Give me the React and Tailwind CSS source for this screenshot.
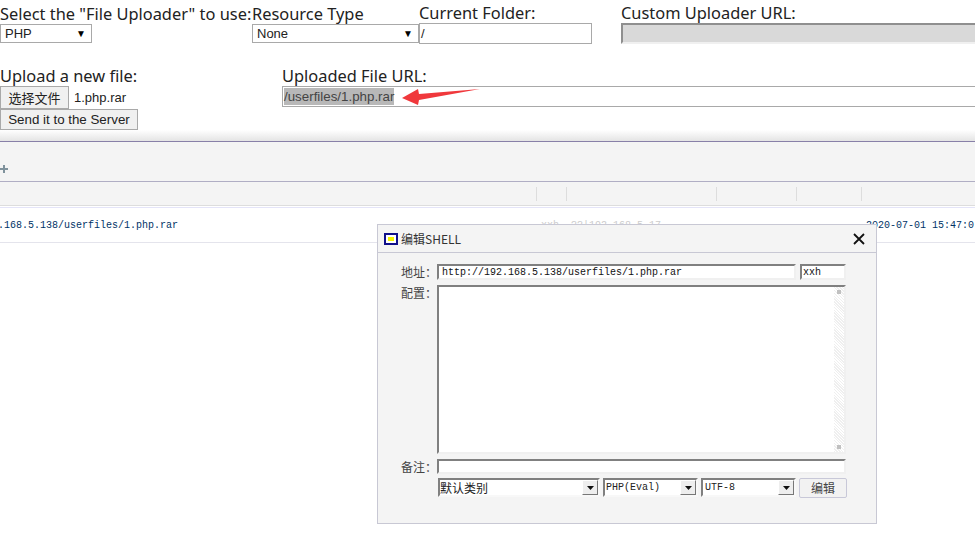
const sans = "font-['Liberation_Sans',Arial,sans-serif]";
const label = "font-['Noto_Sans','Noto_Sans_CJK_SC',sans-serif] text-[16.4px] leading-[20px] text-[#222] whitespace-nowrap";
const mono = "font-['Liberation_Mono','Noto_Sans_CJK_SC',monospace] text-[10px]";
const cjk = "font-['Noto_Sans_CJK_SC',sans-serif] text-[12px]";

function NativeSelect({ text, w }) {
  return (
    <div className={`${w} h-[19px] border border-[#a9a9a9] bg-white flex items-center justify-between pl-1 pr-[5px] ${sans} text-[13px] text-[#222]`}>
      <span>{text}</span>
      <span className="text-[10px] text-black">▼</span>
    </div>
  );
}

function Combo({ text, w, font, pad = "pl-px" }) {
  return (
    <div className={`${w} h-[19px] border-2 border-t-[#808080] border-l-[#808080] border-r-[#f8f8f8] border-b-[#f8f8f8] bg-white flex items-center justify-between ${pad} text-[#222] ${font}`}>
      <span>{text}</span>
      <span className="w-[16px] h-[15px] bg-[#eeeeee] border border-[#fff] border-r-[#777] border-b-[#777] flex items-center justify-center">
        <svg width="7" height="4"><path d="M0 0h7L3.5 4z" fill="#111" /></svg>
      </span>
    </div>
  );
}

function Sunken({ w, h, children, className = "" }) {
  return (
    <div className={`${w} ${h} border-2 border-t-[#808080] border-l-[#808080] border-r-[#f0f0f0] border-b-[#f0f0f0] bg-white ${className}`}>
      {children}
    </div>
  );
}

function FieldLabel({ children }) {
  return <div className={`w-[59px] shrink-0 text-right ${cjk} text-[#444] leading-[15px]`}>{children}</div>;
}

function Dialog() {
  return (
    <div className="absolute left-[377px] top-[224px] w-[500px] h-[300px] bg-[#f4f4f4] border border-[#c8c8d4] flex flex-col">
      <div className="h-[28px] shrink-0 border-b border-[#c8c8d4] flex items-center pl-[6px] pr-[11px] justify-between">
        <div className="flex items-center gap-[3px]">
          <span className="w-[14px] h-[12px] border-2 border-[#10108a] flex items-center justify-center bg-white">
            <span className="w-[6px] h-[4px] bg-[#f4f400]" />
          </span>
          <span className={`${cjk} text-[#333]`}>编辑SHELL</span>
        </div>
        <svg width="12" height="12" viewBox="0 0 12 12"><path d="M1 1l10 10M11 1L1 11" stroke="#111" strokeWidth="1.8" fill="none" /></svg>
      </div>
      <div className="flex flex-col pt-[11px]">
        <div className="flex items-start h-[21px]">
          <FieldLabel>地址：</FieldLabel>
          <div className="flex gap-[4px]">
            <Sunken w="w-[359px]" h="h-[16px]" className={`${mono} text-[#111] pl-[3px] leading-[13px]`}>http://192.168.5.138/userfiles/1.php.rar</Sunken>
            <Sunken w="w-[46px]" h="h-[16px]" className={`${mono} text-[#111] pl-px leading-[13px]`}>xxh</Sunken>
          </div>
        </div>
        <div className="flex items-start h-[174px]">
          <FieldLabel>配置：</FieldLabel>
          <Sunken w="w-[409px]" h="h-[169px]" className="flex justify-end">
            <div className="w-[10px] h-full bg-[repeating-linear-gradient(45deg,#efefef_0,#efefef_1px,#ffffff_1px,#ffffff_2px)] flex flex-col justify-between items-center py-[3px]">
              <span className="w-[4px] h-[4px] bg-[#c0c0c0]" />
              <span className="w-[4px] h-[4px] bg-[#c0c0c0]" />
            </div>
          </Sunken>
        </div>
        <div className="flex items-start h-[19px]">
          <FieldLabel>备注：</FieldLabel>
          <Sunken w="w-[409px]" h="h-[15px]" />
        </div>
        <div className="flex items-start pl-[60px]">
          <Combo text="默认类别" w="w-[162px]" font={cjk} pad="pl-0" />
          <div className="w-[3px]" />
          <Combo text="PHP(Eval)" w="w-[95px]" font={mono} />
          <div className="w-[3px]" />
          <Combo text="UTF-8" w="w-[95px]" font={mono} pad="pl-[2px]" />
          <div className="w-[3px]" />
          <div className={`w-[48px] h-[20px] border border-[#c8c8d8] bg-[#f2f2f2] rounded-[2px] flex items-center justify-center ${cjk} text-[#444]`}>编辑</div>
        </div>
      </div>
    </div>
  );
}

export default function App() {
  return (
    <div className="relative w-[975px] h-[559px] overflow-hidden bg-white">
      <div className="h-[130px] flex flex-col">
        <div className="flex h-[44px] pt-[4px]">
          <div className="w-[252px] shrink-0 flex flex-col"><div className={label}>Select the "File Uploader" to use:</div><div><NativeSelect text="PHP" w="w-[92px]" /></div></div>
          <div className="w-[167px] shrink-0 flex flex-col"><div className={label}>Resource Type</div><div><NativeSelect text="None" w="w-[167px]" /></div></div>
          <div className="w-[202px] shrink-0 flex flex-col -mt-[2px]"><div className={`${label} mt-px`}>Current Folder:</div><div className={`w-[173px] h-[21px] border border-[#a9a9a9] bg-white pl-px ${sans} text-[13px] text-[#222] leading-[19px]`}>/</div></div>
          <div className="flex-1 flex flex-col -mt-[2px]"><div className={`${label} mt-px`}>Custom Uploader URL:</div><div className="h-[21px] border-t-2 border-l-2 border-[#8f8f8f] bg-[#d9d9d9] border-b-2 border-b-[#f0f0f0]" /></div>
        </div>
        <div className="flex mt-[22px]">
          <div className="w-[282px] shrink-0 flex flex-col">
            <div className={label}>Upload a new file:</div>
            <div className="flex items-center gap-[5px]">
              <div className={`w-[69px] h-[23px] border border-[#a9a9a9] bg-[#f0f0f0] flex items-center justify-center ${cjk} text-[13px] text-[#222]`}>选择文件</div>
              <span className={`${sans} text-[13px] text-[#222]`}>1.php.rar</span>
            </div>
            <div className={`w-[138px] h-[21px] border border-[#a9a9a9] bg-[#f0f0f0] flex items-center justify-center ${sans} text-[13.33px] text-[#222]`}>Send it to the Server</div>
          </div>
          <div className="w-[695px] shrink-0 flex flex-col">
            <div className={label}>Uploaded File URL:</div>
            <div className={`relative h-[21px] border border-[#a9a9a9] border-r-0 bg-white pl-px flex items-center ${sans} text-[13.33px] text-[#444]`}>
              <span className="bg-[#b8b8b8] leading-[17px]">/userfiles/1.php.rar</span>
            </div>
          </div>
        </div>
      </div>
      <div className="h-[11px] bg-linear-to-b from-[#ffffff] to-[#e4e4e4]" />
      <div className="h-[40px] bg-[#f4f4f4] border-t border-[#8880a8] flex items-center">
        <svg width="8" height="8" viewBox="0 0 8 8" className="mt-[14px]"><path d="M0 4h8M4 0v8" stroke="#7f929c" strokeWidth="2" /></svg>
      </div>
      <div className="h-[25px] bg-[#f4f4f4] border-t border-[#b0aec4] border-b border-b-[#dddddd] flex items-center">
        <div className="w-[537px] h-[14px] border-r border-[#dddddd]" />
        <div className="w-[30px] h-[14px] border-r border-[#dddddd]" />
        <div className="w-[150px] h-[14px] border-r border-[#dddddd]" />
        <div className="w-[80px] h-[14px] border-r border-[#dddddd]" />
        <div className="w-[65px] h-[14px] border-r border-[#dddddd]" />
      </div>
      <div className={`mt-px h-[36px] pt-px border-t border-t-[#e4e4f8] border-b border-b-[#e4e4ec] flex items-center ${mono} text-[#003366] whitespace-pre`}>
        <span className="w-[541px] shrink-0 -ml-[2px] mr-[2px]">.168.5.138/userfiles/1.php.rar</span>
        <span className="w-[325px] shrink-0 text-[#cccccc]">xxh  ??|192.168.5.17</span>
        <span>2020-07-01 15:47:0</span>
      </div>
      <svg width="80" height="18" viewBox="0 0 80 18" className="absolute left-[401px] top-[88px]">
        <path d="M1 10L17 1L18 6L79 1L18 12L17 17z" fill="#f0383c" />
      </svg>
      <Dialog />
    </div>
  );
}
